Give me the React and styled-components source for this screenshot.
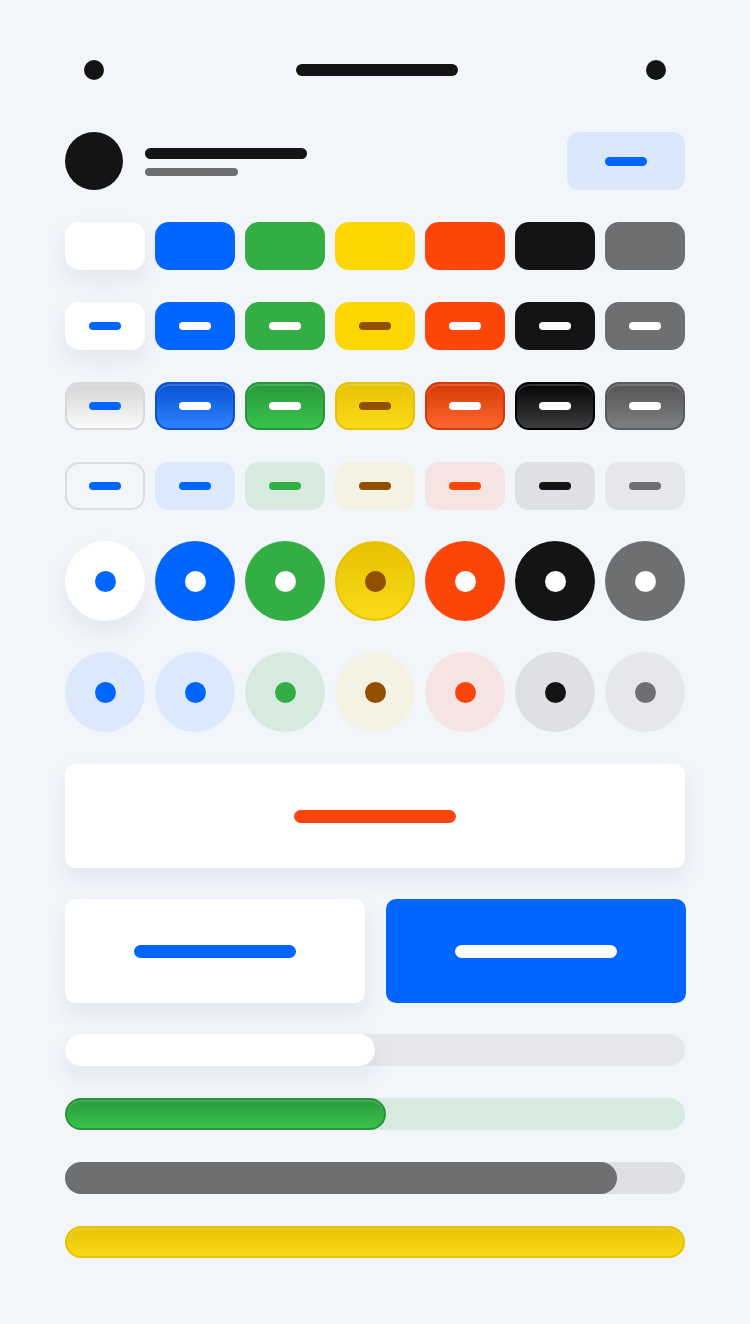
import styled, { createGlobalStyle, css } from "styled-components";

const GlobalStyle = createGlobalStyle`
  html, body {
    margin: 0;
    padding: 0;
    background: #f2f5fa;
    font-family: "Inter", "Liberation Sans", sans-serif;
  }
`;

const palette = {
  white: { solid: "#ffffff", ink: "#0066ff", tint: "#ffffff", tintInk: "#0066ff", dot: "#0066ff", top: "#d4d4d6", bottom: "#fbfbfb", edge: "#d9d9db" },
  blue: { solid: "#0066ff", ink: "#ffffff", tint: "#dce8fb", tintInk: "#0066ff", dot: "#0066ff", top: "#0852d2", bottom: "#2d82ff", edge: "#0a52cf" },
  green: { solid: "#32ae45", ink: "#ffffff", tint: "#d6eadf", tintInk: "#32ae45", dot: "#32ae45", top: "#289a3a", bottom: "#39c24e", edge: "#27953a" },
  yellow: { solid: "#fcd600", ink: "#924f00", tint: "#f3f2e3", tintInk: "#924f00", dot: "#924f00", top: "#e8c305", bottom: "#fbda18", edge: "#e7c000" },
  orange: { solid: "#fb4509", ink: "#ffffff", tint: "#f5e4e1", tintInk: "#fb4509", dot: "#fb4509", top: "#d63b05", bottom: "#ff6530", edge: "#d23a06" },
  black: { solid: "#141414", ink: "#ffffff", tint: "#dfe0e4", tintInk: "#141414", dot: "#141414", top: "#050505", bottom: "#3c3c3c", edge: "#000000" },
  gray: { solid: "#6e6f71", ink: "#ffffff", tint: "#e6e7eb", tintInk: "#6e6f71", dot: "#6e6f71", top: "#545456", bottom: "#7e7f81", edge: "#5a5b5d" },
};

const keys = ["white", "blue", "green", "yellow", "orange", "black", "gray"];

const softShadow = "0 10px 22px rgba(30, 45, 90, 0.07)";

const Page = styled.div`
  width: 750px;
  min-height: 1324px;
  box-sizing: border-box;
  padding: 60px 65px 0;
  display: flex;
  flex-direction: column;
`;

const StatusBar = styled.div`
  height: 20px;
  padding: 0 19px;
  display: flex;
  align-items: center;
  justify-content: space-between;
`;

const Dot = styled.span`
  width: 20px;
  height: 20px;
  border-radius: 50%;
  background: #141414;
`;

const Notch = styled.span`
  width: 162px;
  height: 12px;
  border-radius: 6px;
  background: #141414;
  margin-left: 4px;
`;

const Header = styled.div`
  margin-top: 52px;
  height: 58px;
  display: flex;
  align-items: center;
  gap: 22px;
`;

const Avatar = styled.div`
  width: 58px;
  height: 58px;
  border-radius: 50%;
  background: #141414;
  flex-shrink: 0;
`;

const Titles = styled.div`
  flex: 1;
  display: flex;
  flex-direction: column;
  gap: 9px;
  padding-top: 2px;
`;

const Line = styled.span`
  display: block;
  width: ${(p) => p.$w}px;
  height: ${(p) => p.$h}px;
  border-radius: ${(p) => p.$h / 2}px;
  background: ${(p) => p.$c};
`;

const HeaderButton = styled.div`
  width: 118px;
  height: 58px;
  border-radius: 12px;
  background: #dbe7fa;
  display: flex;
  align-items: center;
  justify-content: center;
`;

const Grid = styled.div`
  display: grid;
  grid-template-columns: repeat(7, 80px);
  column-gap: 10px;
  row-gap: ${(p) => p.$gap}px;
  margin-top: ${(p) => p.$mt}px;
`;

const Tile = styled.div`
  height: 48px;
  box-sizing: border-box;
  border-radius: 14px;
  display: flex;
  align-items: center;
  justify-content: center;
  ${(p) => {
    const c = palette[p.$k];
    if (p.$variant === "gloss")
      return css`
        background: linear-gradient(180deg, ${c.top}, ${c.bottom});
        border: 2px solid ${c.edge};
        box-shadow: inset 0 2px 0 rgba(255, 255, 255, 0.18);
      `;
    if (p.$variant === "tint")
      return p.$k === "white"
        ? css`
            background: transparent;
            border: 2px solid #dcdde1;
          `
        : css`
            background: ${c.tint};
          `;
    return css`
      background: ${c.solid};
      ${p.$k === "white" && `box-shadow: ${softShadow};`}
    `;
  }}
`;

const Pill = styled.span`
  width: 32px;
  height: 8px;
  border-radius: 4px;
  background: ${(p) => p.$c};
`;

const Round = styled.div`
  width: 80px;
  height: 80px;
  box-sizing: border-box;
  border-radius: 50%;
  display: flex;
  align-items: center;
  justify-content: center;
  background: ${(p) => p.$bg};
  ${(p) => p.$shadow && `box-shadow: ${softShadow};`}
  ${(p) =>
    p.$gloss &&
    css`
      background: linear-gradient(180deg, #e6c200, #fadb1a);
      border: 2px solid #eac300;
    `}
`;

const Pip = styled.span`
  width: 21px;
  height: 21px;
  border-radius: 50%;
  background: ${(p) => p.$c};
`;

const Card = styled.div`
  height: 104px;
  border-radius: 10px;
  background: ${(p) => p.$bg || "#ffffff"};
  display: flex;
  align-items: center;
  justify-content: center;
  margin-top: ${(p) => p.$mt || 0}px;
  ${(p) => !p.$bg && `box-shadow: ${softShadow};`}
`;

const Bar = styled.span`
  width: 162px;
  height: 13px;
  border-radius: 6.5px;
  background: ${(p) => p.$c};
`;

const Pair = styled.div`
  margin-top: 31px;
  display: grid;
  grid-template-columns: 300px 300px;
  column-gap: 21px;
`;

const Tracks = styled.div`
  margin-top: 31px;
  display: flex;
  flex-direction: column;
  gap: 32px;
`;

const Track = styled.div`
  height: 32px;
  border-radius: 16px;
  background: ${(p) => p.$bg};
  display: flex;
`;

const Fill = styled.div`
  height: 32px;
  box-sizing: border-box;
  border-radius: 16px;
  ${(p) =>
    p.$kind === "white"
      ? css`
          background: #ffffff;
          box-shadow: ${softShadow};
        `
      : p.$kind === "flat"
      ? css`
          background: #6e6f71;
        `
      : css`
          background: linear-gradient(180deg, ${palette[p.$kind].top}, ${palette[p.$kind].bottom});
          border: 2px solid ${palette[p.$kind].edge};
          box-shadow: inset 0 2px 0 rgba(255, 255, 255, 0.15);
        `}
`;

const tracks = [
  { bg: "#e6e7eb", kind: "white", pct: 50 },
  { bg: "#d6eadf", kind: "green", pct: 51.8 },
  { bg: "#dfe0e4", kind: "flat", pct: 89 },
  { bg: "#f3f2e3", kind: "yellow", pct: 100 },
];

export default function App() {
  return (
    <>
      <GlobalStyle />
      <Page>
        <StatusBar>
          <Dot />
          <Notch />
          <Dot />
        </StatusBar>

        <Header>
          <Avatar />
          <Titles>
            <Line $w={162} $h={11} $c="#141414" />
            <Line $w={93} $h={8} $c="#6e6f71" />
          </Titles>
          <HeaderButton>
            <Line $w={42} $h={9} $c="#0066ff" />
          </HeaderButton>
        </Header>

        <Grid $mt={32} $gap={32}>
          {keys.map((k) => (
            <Tile key={"s" + k} $k={k} $variant="solid" />
          ))}
          {keys.map((k) => (
            <Tile key={"p" + k} $k={k} $variant="solid">
              <Pill $c={palette[k].ink} />
            </Tile>
          ))}
          {keys.map((k) => (
            <Tile key={"g" + k} $k={k} $variant="gloss">
              <Pill $c={palette[k].ink} />
            </Tile>
          ))}
          {keys.map((k) => (
            <Tile key={"t" + k} $k={k} $variant="tint">
              <Pill $c={palette[k].tintInk} />
            </Tile>
          ))}
        </Grid>

        <Grid $mt={31} $gap={31}>
          {keys.map((k) => (
            <Round
              key={"r" + k}
              $bg={palette[k].solid}
              $shadow={k === "white"}
              $gloss={k === "yellow"}
            >
              <Pip $c={palette[k].ink} />
            </Round>
          ))}
          {keys.map((k) => (
            <Round key={"rt" + k} $bg={k === "white" ? "#dce8fb" : palette[k].tint}>
              <Pip $c={palette[k].dot} />
            </Round>
          ))}
        </Grid>

        <Card $mt={32}>
          <Bar $c="#fb4509" />
        </Card>

        <Pair>
          <Card>
            <Bar $c="#0066ff" />
          </Card>
          <Card $bg="#0066ff">
            <Bar $c="#ffffff" />
          </Card>
        </Pair>

        <Tracks>
          {tracks.map((t, i) => (
            <Track key={i} $bg={t.bg}>
              <Fill $kind={t.kind} style={{ width: `${t.pct}%` }} />
            </Track>
          ))}
        </Tracks>
      </Page>
    </>
  );
}
